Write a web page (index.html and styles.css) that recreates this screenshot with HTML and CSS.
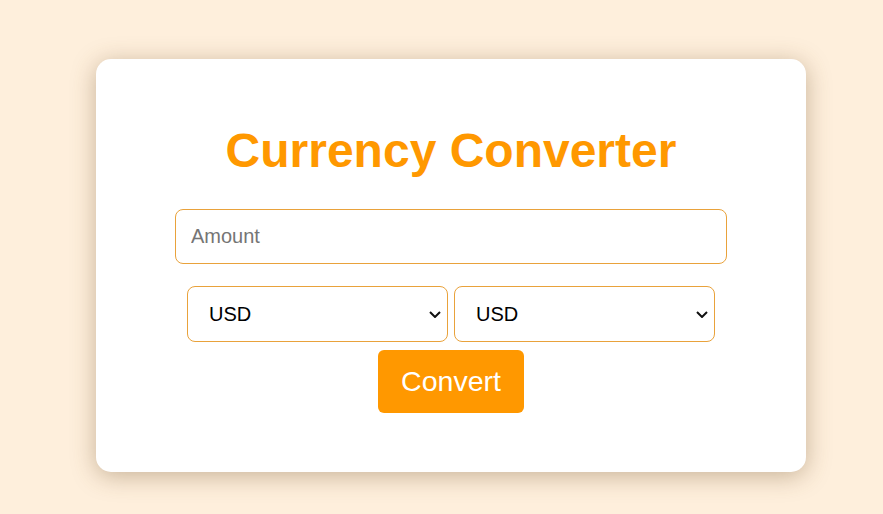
FILE: index.html
```html
<!DOCTYPE html>
<html lang="en">
<head>
<meta charset="utf-8">
<title>Currency Converter</title>
<link rel="stylesheet" href="styles.css">
</head>
<body>
<main class="page">
  <section class="card">
    <h1 class="title">Currency Converter</h1>
    <input class="amount" type="text" placeholder="Amount">
    <div class="selects">
      <div class="select-wrap">
        <select class="currency"><option>USD</option><option>EUR</option><option>GBP</option></select>
        <svg class="chevron" width="12" height="7" viewBox="0 0 12 7" aria-hidden="true"><path d="M1 1l5 5 5-5" fill="none" stroke="#111" stroke-width="2"/></svg>
      </div>
      <div class="select-wrap">
        <select class="currency"><option>USD</option><option>EUR</option><option>GBP</option></select>
        <svg class="chevron" width="12" height="7" viewBox="0 0 12 7" aria-hidden="true"><path d="M1 1l5 5 5-5" fill="none" stroke="#111" stroke-width="2"/></svg>
      </div>
    </div>
    <button class="convert" type="button">Convert</button>
  </section>
</main>
</body>
</html>
```

FILE: styles.css
```css
html, body {
  margin: 0;
  padding: 0;
}
body {
  background: #feefdc;
  font-family: "Liberation Sans", Arial, sans-serif;
}
.page {
  display: flex;
  justify-content: center;
  padding: 59px 0 42px 19px;
}
.card {
  width: 710px;
  height: 413px;
  box-sizing: border-box;
  background: #fff;
  border-radius: 15px;
  box-shadow: 0 4px 24px rgba(110, 80, 40, 0.38);
  display: flex;
  flex-direction: column;
  align-items: center;
  padding-top: 64px;
}
.title {
  margin: 0;
  font-size: 48px;
  font-weight: bold;
  color: #ff9800;
  line-height: 55px;
}
.amount {
  margin-top: 31px;
  width: 552px;
  height: 55px;
  box-sizing: border-box;
  border: 1px solid #e9a23b;
  border-radius: 8px;
  padding: 0 15px;
  font-family: "Liberation Sans", Arial, sans-serif;
  font-size: 20px;
  color: #222;
  outline: none;
}
.amount::placeholder {
  color: #757575;
}
.selects {
  margin-top: 22px;
  display: flex;
  gap: 6px;
}
.select-wrap {
  position: relative;
}
.currency {
  display: block;
  width: 261px;
  height: 56px;
  box-sizing: border-box;
  border: 1px solid #e9a23b;
  border-radius: 8px;
  padding: 0 30px 0 21px;
  background-color: #fff;
  font-family: "Liberation Sans", Arial, sans-serif;
  font-size: 20px;
  color: #000;
  appearance: none;
  -webkit-appearance: none;
}
.chevron {
  position: absolute;
  right: 7px;
  top: 25px;
  pointer-events: none;
}
.convert {
  margin-top: 8px;
  width: 146px;
  height: 63px;
  border: none;
  border-radius: 6px;
  background: #ff9800;
  color: #fff;
  font-family: "Liberation Sans", Arial, sans-serif;
  font-size: 28.5px;
  cursor: pointer;
}
```
